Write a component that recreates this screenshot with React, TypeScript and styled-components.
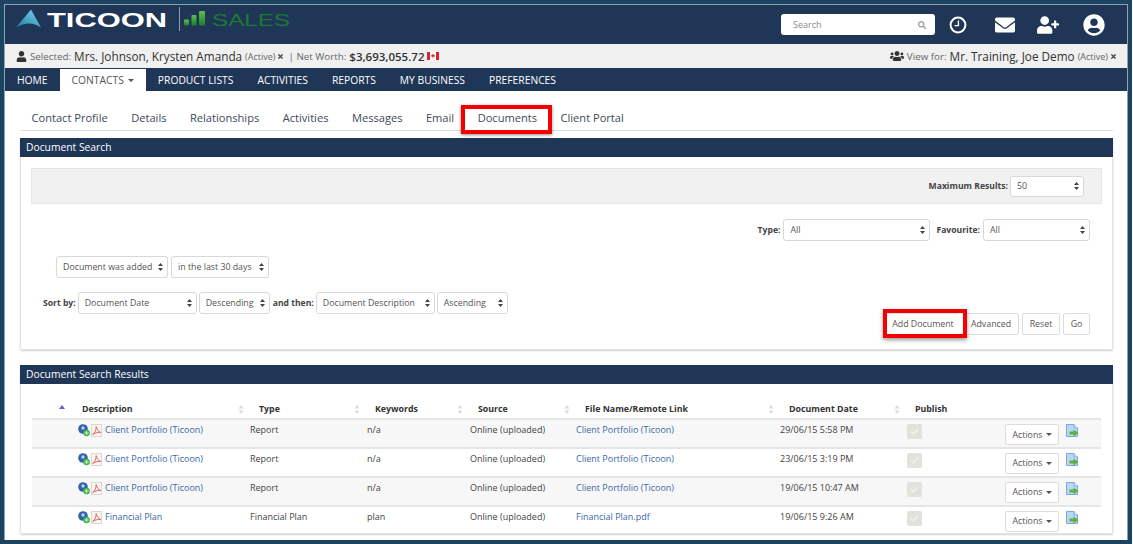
import styled, { createGlobalStyle } from "styled-components";
import { FaEnvelope, FaSearch, FaTimes, FaUser, FaUserCircle, FaUserPlus, FaUsers } from "react-icons/fa";

const Global = createGlobalStyle`
  html, body {
    margin: 0;
    padding: 0;
    background: #ffffff;
  }
  * {
    box-sizing: border-box;
  }
`;

const navy = "#1f3657";

const Frame = styled.div`
  width: 1132px;
  height: 544px;
  border: 4px solid #1d4363;
  overflow: hidden;
  font-family: "Open Sans", "Liberation Sans", sans-serif;
  color: #333333;
  background: #fff;
`;

const Inner = styled.div`
  height: 100%;
  border: 1px solid #8fa3b5;
  border-bottom: 0;
  overflow: hidden;
`;

const Header = styled.header`
  height: 39px;
  background: ${navy};
  display: flex;
  align-items: center;
  padding-left: 11px;
  padding-right: 21px;
`;

const Logo = styled.svg`
  width: 290px;
  height: 34px;
  flex: none;
  overflow: visible;
`;

const HeaderRight = styled.div`
  margin-left: auto;
  display: flex;
  align-items: center;
  color: #fff;
`;

const SearchBox = styled.div`
  width: 154px;
  height: 21px;
  background: #fff;
  border-radius: 3px;
  display: flex;
  align-items: center;
  justify-content: space-between;
  padding: 0 9px 0 12px;
  font-size: 9px;
  color: #8a8a8a;
`;

const HeaderIcon = styled.span<{ $w: number; $ml: number }>`
  width: ${(p) => p.$w}px;
  margin-left: ${(p) => p.$ml}px;
  display: flex;
  justify-content: center;
  font-size: 0;
`;

const SelectedBar = styled.div`
  height: 24px;
  background: #f0f0f0;
  display: flex;
  align-items: center;
  padding: 0 10px 0 11px;
  font-size: 9.8px;
  color: #666;
`;

const BarName = styled.span<{ $strong?: boolean }>`
  font-size: ${(p) => (p.$strong ? "11.5px" : "11.75px")};
  font-weight: ${(p) => (p.$strong ? 600 : 400)};
  color: #333;
  margin: 0 3px;
`;

const Small = styled.span`
  font-size: 9px;
  color: #666;
  margin-right: 2px;
`;

const BarRight = styled.div`
  margin-left: auto;
  display: flex;
  align-items: center;
`;

const MainNav = styled.nav`
  height: 23px;
  background: ${navy};
  display: flex;
`;

const NavItem = styled.a<{ $active?: boolean }>`
  display: flex;
  align-items: center;
  gap: 4px;
  margin-top: ${(p) => (p.$active ? "1px" : "0")};
  padding: 0 12px;
  font-size: 10.3px;
  color: ${(p) => (p.$active ? "#555" : "#fff")};
  background: ${(p) => (p.$active ? "#fff" : "transparent")};
`;

const Caret = styled.i`
  display: inline-block;
  border-top: 3px solid currentColor;
  border-left: 3px solid transparent;
  border-right: 3px solid transparent;
`;

const Tabs = styled.div`
  margin: 14px 14px 0 15px;
  height: 26px;
  border-bottom: 1px solid #dddddd;
  display: flex;
`;

const Tab = styled.a<{ $marked?: boolean }>`
  position: relative;
  padding: 0 12px 0 11.5px;
  height: 25px;
  display: flex;
  align-items: center;
  font-size: 11.1px;
  color: #3c4a5c;

  ${(p) =>
    p.$marked &&
    `
    &::after {
      content: "";
      position: absolute;
      left: -5px;
      right: -3px;
      top: 0;
      bottom: -4px;
      border: 4px solid #f40000;
      box-shadow: 0 1px 3px rgba(0, 0, 0, 0.45);
    }
  `}
`;

const Panel = styled.section<{ $h?: number }>`
  margin: 7px 14px 0 15px;
  border: 1px solid #e2e2e2;
  border-top: 0;
  border-radius: 2px;
  box-shadow: 0 1px 2px rgba(0, 0, 0, 0.18);
  height: ${(p) => (p.$h ? `${p.$h}px` : "auto")};
`;

const ResultsPanel = styled(Panel)`
  margin-top: 15px;
`;

const PanelTitle = styled.h2`
  margin: 0 -1px;
  height: 19px;
  background: ${navy};
  color: #fff;
  font-size: 10.3px;
  font-weight: 400;
  line-height: 19px;
  padding-left: 6px;
`;

const Body = styled.div`
  padding: 11px 10px 0 10px;
`;

const MaxBar = styled.div`
  height: 36px;
  background: #f1f1f1;
  border: 1px solid #e6e6e6;
  display: flex;
  align-items: center;
  justify-content: flex-end;
  padding-right: 17px;
  gap: 2px;
`;

const Label = styled.label<{ $ml?: number; $mr?: number }>`
  font-size: 8.6px;
  font-weight: 700;
  color: #444;
  margin-left: ${(p) => p.$ml ?? 0}px;
  margin-right: ${(p) => p.$mr ?? 0}px;
`;

const Row = styled.div<{ $top: number; $left?: number; $right?: number; $end?: boolean; $gap?: number }>`
  display: flex;
  align-items: center;
  justify-content: ${(p) => (p.$end ? "flex-end" : "flex-start")};
  margin-top: ${(p) => p.$top}px;
  padding-left: ${(p) => p.$left ?? 0}px;
  padding-right: ${(p) => p.$right ?? 0}px;
  gap: ${(p) => p.$gap ?? 3}px;
`;

const SelectBox = styled.div<{ $w: number; $h?: number }>`
  width: ${(p) => p.$w}px;
  height: ${(p) => p.$h ?? 22}px;
  flex: none;
  background: #fff;
  border: 1px solid #d8d8d8;
  border-radius: 3px;
  display: flex;
  align-items: center;
  justify-content: space-between;
  padding: 0 4px 0 6px;
  font-size: 8.8px;
  color: #555;
  white-space: nowrap;
`;

const ArrowStack = styled.svg`
  width: 5px;
  height: 8px;
  flex: none;
`;

const Buttons = styled.div`
  display: flex;
  justify-content: flex-end;
  margin: -1px 12px 0 0;
  gap: 3px;
`;

const Btn = styled.button<{ $w: number; $marked?: boolean }>`
  position: relative;
  width: ${(p) => p.$w}px;
  height: 22px;
  padding: 0;
  background: #fff;
  border: 1px solid #dddddd;
  border-radius: 2px;
  font-family: inherit;
  font-size: 8.8px;
  color: #555;
  ${(p) =>
    p.$marked &&
    `
    border-right-color: transparent;
    &::after {
      content: "";
      position: absolute;
      z-index: 1;
      left: -4px;
      right: -8px;
      top: -5px;
      bottom: -4px;
      border: 4px solid #f40000;
      box-shadow: 0 2px 4px rgba(0, 0, 0, 0.4);
    }
  `}
`;

const Table = styled.div`
  margin: 16px 11px 0 11px;
`;

const HeadRow = styled.div`
  display: grid;
  grid-template-columns: 179px 116px 103px 107px 204px 126px 1fr;
  margin-left: 26px;
  height: 18px;
  align-items: center;
`;

const Th = styled.div`
  display: flex;
  align-items: center;
  padding-left: 1px;
  font-size: 8.8px;
  font-weight: 700;
  color: #333;
`;

const SortSlot = styled.span<{ $w: number }>`
  width: ${(p) => p.$w}px;
  flex: none;
  display: flex;
`;

const TableRow = styled.div<{ $shade?: boolean }>`
  display: grid;
  grid-template-columns: 46px 172px 117px 103px 106px 204px 127px 98px 61px 35px;
  height: 28.85px;
  padding-top: 2px;
  background: ${(p) => (p.$shade ? "#f7f7f7" : "#fff")};
  border-top: 2px solid #e6e6e6;
  font-size: 9px;
  color: #444;
`;

const Cell = styled.div<{ $pt?: number }>`
  padding-top: ${(p) => p.$pt ?? 1}px;
  line-height: 13px;
  white-space: nowrap;
`;

const DocCell = styled(Cell)`
  display: flex;
  align-items: flex-start;
  gap: 1px;
  padding-top: 2px;
`;

const Link = styled.a`
  color: #3b67a8;
`;

const DocLink = styled(Link)`
  margin: -1px 0 0 2px;
`;

const CheckBox = styled.span`
  display: flex;
  width: 15px;
  height: 15px;
  background: #e2e1dc;
  border-radius: 2px;
  align-items: center;
  justify-content: center;
`;

const ActionBtn = styled.button`
  width: 54px;
  height: 21px;
  padding: 0;
  background: #fff;
  border: 1px solid #dddddd;
  border-radius: 2px;
  font-family: inherit;
  font-size: 8.8px;
  color: #555;
  display: flex;
  align-items: center;
  justify-content: center;
  gap: 3px;
`;

const BarIcon = styled.span<{ $mr?: number }>`
  display: flex;
  margin-right: ${(p) => p.$mr ?? 0}px;
`;

const Arrows = () => (
  <ArrowStack viewBox="0 0 5 8">
    <path d="M2.5 0 L5 3 H0 Z M2.5 8 L0 5 H5 Z" fill="#444" />
  </ArrowStack>
);

const Select = ({ w, h, children }: { w: number; h?: number; children: string }) => (
  <SelectBox $w={w} $h={h}>
    <span>{children}</span>
    <Arrows />
  </SelectBox>
);

const SortIcon = ({ active }: { active?: boolean }) => (
  <svg width="6" height="9" viewBox="0 0 6 9">
    {active ? (
      <path d="M3 0 L6 4 H0 Z" fill="#5a63d8" />
    ) : (
      <path d="M3 0 L5.5 3.6 H0.5 Z M3 9 L0.5 5.4 H5.5 Z" fill="#dcdcdc" />
    )}
  </svg>
);

const GlobeIcon = () => (
  <svg width="12" height="13" viewBox="0 0 12 13">
    <circle cx="5" cy="5" r="4.8" fill="#2f63ad" />
    <circle cx="5" cy="4" r="1.7" fill="#bcd2ee" />
    <circle cx="8.6" cy="9" r="3.3" fill="#3fb544" />
    <path d="M8.6 7 V11 M6.6 9 H10.6" stroke="#d8f5d8" strokeWidth="1" />
  </svg>
);

const PdfIcon = () => (
  <svg width="11" height="13" viewBox="0 0 11 13">
    <rect x="0.5" y="0.5" width="10" height="12" fill="#f8f5f3" stroke="#ded6d2" />
    <path d="M1.6 10.5 C4 9 5.5 5 5.1 2.6 C6 5.5 7.4 8 9.8 8.4 C7.4 8.2 4.4 8.8 1.6 10.5 Z" fill="none" stroke="#dd5a50" strokeWidth="0.9" />
  </svg>
);

const ExportIcon = () => (
  <svg width="13" height="14" viewBox="0 0 13 14">
    <path d="M0.5 0.5 H8 L11.5 4 V12.5 H0.5 Z" fill="#b9d6f3" stroke="#7aa9dc" />
    <path d="M8 0.5 V4 H11.5" fill="#e3f0fb" stroke="#7aa9dc" />
    <path d="M3.5 7.6 H7.5 V5.6 L12.5 9 L7.5 12.4 V10.4 H3.5 Z" fill="#63ad42" />
  </svg>
);

const ClockIcon = () => (
  <svg width="18" height="18" viewBox="0 0 18 18">
    <circle cx="9" cy="9" r="7.4" fill="none" stroke="#fff" strokeWidth="2" />
    <path d="M9.4 4.5 V9.6 H5.6" fill="none" stroke="#fff" strokeWidth="1.4" />
  </svg>
);

const CanadaFlag = () => (
  <svg width="12" height="8" viewBox="0 0 12 8">
    <rect width="12" height="8" fill="#fff" />
    <rect width="3" height="8" fill="#d9262c" />
    <rect x="9" width="3" height="8" fill="#d9262c" />
    <path d="M6 1.4 L7 3.2 L8 2.9 L7.6 4.8 H4.4 L4 2.9 L5 3.2 Z M5.7 4.8 H6.3 V6.4 H5.7 Z" fill="#d9262c" />
  </svg>
);

const rows = [
  { name: "Client Portfolio (Ticoon)", type: "Report", kw: "n/a", file: "Client Portfolio (Ticoon)", date: "29/06/15 5:58 PM" },
  { name: "Client Portfolio (Ticoon)", type: "Report", kw: "n/a", file: "Client Portfolio (Ticoon)", date: "23/06/15 3:19 PM" },
  { name: "Client Portfolio (Ticoon)", type: "Report", kw: "n/a", file: "Client Portfolio (Ticoon)", date: "19/06/15 10:47 AM" },
  { name: "Financial Plan", type: "Financial Plan", kw: "plan", file: "Financial Plan.pdf", date: "19/06/15 9:26 AM" },
];

const columns = ["Description", "Type", "Keywords", "Source", "File Name/Remote Link", "Document Date", "Publish"];

const App = () => {
  return (
    <Frame>
      <Global />
      <Inner>
        <Header>
          <Logo viewBox="0 0 290 34">
            <defs>
              <linearGradient id="tri" x1="0" y1="1" x2="1" y2="0">
                <stop offset="0" stopColor="#1d7fa8" />
                <stop offset="1" stopColor="#7fd0ea" />
              </linearGradient>
              <linearGradient id="bar" x1="0" y1="0" x2="0" y2="1">
                <stop offset="0" stopColor="#5cc04a" />
                <stop offset="1" stopColor="#1f7d2e" />
              </linearGradient>
            </defs>
            <path d="M0 19.5 L15 1.5 L25 19.5 C17 14 9 14 0 19.5 Z" fill="url(#tri)" />
            <text x="31" y="18.5" fontFamily="Liberation Sans" fontWeight="700" fontSize="20" fill="#ffffff" textLength="120" lengthAdjust="spacingAndGlyphs">
              TICOON
            </text>
            <rect x="163" y="-1" width="1" height="24" fill="#8b9bb0" />
            <rect x="168" y="11.5" width="5" height="6" rx="1" fill="url(#bar)" />
            <rect x="175.5" y="7" width="5" height="10.5" rx="1" fill="url(#bar)" />
            <rect x="183" y="3" width="6" height="14.5" rx="1" fill="url(#bar)" />
            <text x="196" y="17.5" fontFamily="Liberation Sans" fontSize="16.5" fill="#1b7a35" textLength="78" lengthAdjust="spacingAndGlyphs">
              SALES
            </text>
          </Logo>
          <HeaderRight>
            <SearchBox>
              Search
              <FaSearch size={8} color="#999" />
            </SearchBox>
            <HeaderIcon $w={18} $ml={14}>
              <ClockIcon />
            </HeaderIcon>
            <HeaderIcon $w={20} $ml={28}>
              <FaEnvelope size={20} />
            </HeaderIcon>
            <HeaderIcon $w={24} $ml={21}>
              <FaUserPlus size={22} />
            </HeaderIcon>
            <HeaderIcon $w={24} $ml={22}>
              <FaUserCircle size={22} />
            </HeaderIcon>
          </HeaderRight>
        </Header>

        <SelectedBar>
          <BarIcon $mr={3}>
            <FaUser size={11} color="#333" />
          </BarIcon>
          Selected:
          <BarName>Mrs. Johnson, Krysten Amanda</BarName>
          <Small>(Active)</Small>
          <BarIcon $mr={4}>
            <FaTimes size={7} color="#444" />
          </BarIcon>
          | Net Worth:
          <BarName $strong>$3,693,055.72</BarName>
          <CanadaFlag />
          <BarRight>
            <BarIcon $mr={3}>
              <FaUsers size={14} color="#333" />
            </BarIcon>
            View for:
            <BarName>Mr. Training, Joe Demo</BarName>
            <Small>(Active)</Small>
            <FaTimes size={7} color="#444" />
          </BarRight>
        </SelectedBar>

        <MainNav>
          <NavItem>HOME</NavItem>
          <NavItem $active>
            CONTACTS <Caret />
          </NavItem>
          <NavItem>PRODUCT LISTS</NavItem>
          <NavItem>ACTIVITIES</NavItem>
          <NavItem>REPORTS</NavItem>
          <NavItem>MY BUSINESS</NavItem>
          <NavItem>PREFERENCES</NavItem>
        </MainNav>

        <Tabs>
          <Tab>Contact Profile</Tab>
          <Tab>Details</Tab>
          <Tab>Relationships</Tab>
          <Tab>Activities</Tab>
          <Tab>Messages</Tab>
          <Tab>Email</Tab>
          <Tab $marked>Documents</Tab>
          <Tab>Client Portal</Tab>
        </Tabs>

        <Panel $h={212}>
          <PanelTitle>Document Search</PanelTitle>
          <Body>
            <MaxBar>
              <Label>Maximum Results:</Label>
              <Select w={74} h={21}>
                50
              </Select>
            </MaxBar>
            <Row $top={15} $end $right={12}>
              <Label>Type:</Label>
              <Select w={147}>All</Select>
              <Label $ml={3}>Favourite:</Label>
              <Select w={107}>All</Select>
            </Row>
            <Row $top={15} $left={25}>
              <Select w={112}>Document was added</Select>
              <Select w={98}>in the last 30 days</Select>
            </Row>
            <Row $top={14} $left={12} $gap={2}>
              <Label>Sort by:</Label>
              <Select w={119}>Document Date</Select>
              <Select w={71}>Descending</Select>
              <Label $ml={1}>and then:</Label>
              <Select w={119}>Document Description</Select>
              <Select w={71}>Ascending</Select>
            </Row>
            <Buttons>
              <Btn $w={74} $marked>
                Add Document
              </Btn>
              <Btn $w={56}>Advanced</Btn>
              <Btn $w={38}>Reset</Btn>
              <Btn $w={27}>Go</Btn>
            </Buttons>
          </Body>
        </Panel>

        <ResultsPanel>
          <PanelTitle>Document Search Results</PanelTitle>
          <Table>
            <HeadRow>
              {columns.map((c, i) => (
                <Th key={c}>
                  <SortSlot $w={i === 0 ? 23 : 21}>
                    <SortIcon active={i === 0} />
                  </SortSlot>
                  {c}
                </Th>
              ))}
            </HeadRow>
            {rows.map((r, i) => (
              <TableRow key={i} $shade={i % 2 === 0}>
                <span />
                <DocCell>
                  <GlobeIcon />
                  <PdfIcon />
                  <DocLink>{r.name}</DocLink>
                </DocCell>
                <Cell>{r.type}</Cell>
                <Cell>{r.kw}</Cell>
                <Cell>Online (uploaded)</Cell>
                <Cell>
                  <Link>{r.file}</Link>
                </Cell>
                <Cell>{r.date}</Cell>
                <Cell $pt={2}>
                  <CheckBox>
                    <svg width="9" height="7" viewBox="0 0 9 7">
                      <path d="M1 3.5 L3.5 6 L8 1" fill="none" stroke="#f4f4f2" strokeWidth="1.2" />
                    </svg>
                  </CheckBox>
                </Cell>
                <Cell $pt={2}>
                  <ActionBtn>
                    Actions <Caret />
                  </ActionBtn>
                </Cell>
                <Cell $pt={2}>
                  <ExportIcon />
                </Cell>
              </TableRow>
            ))}
          </Table>
        </ResultsPanel>
      </Inner>
    </Frame>
  );
};

export default App;
